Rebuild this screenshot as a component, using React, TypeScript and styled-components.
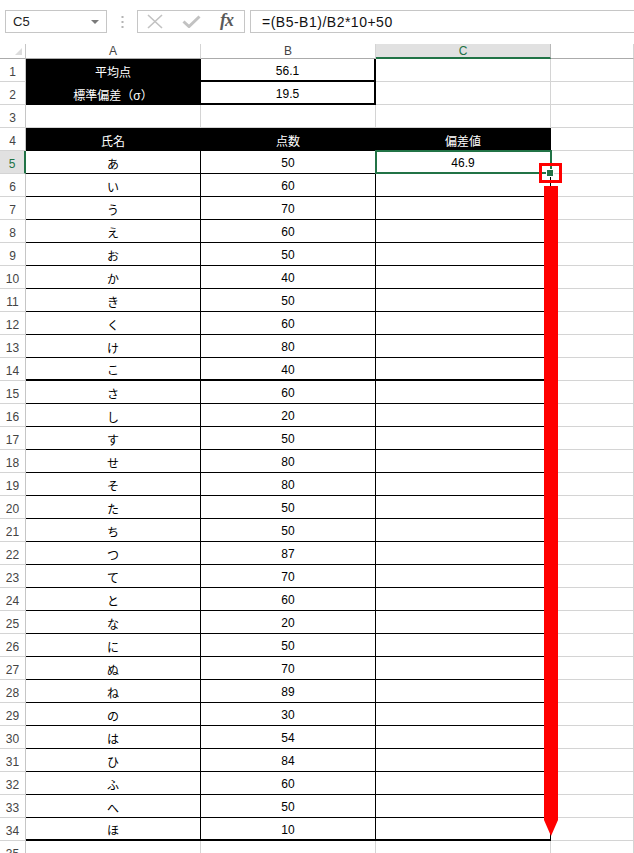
import React from 'react';
import styled, { createGlobalStyle } from 'styled-components';

const GREEN = '#217346';
const GRID = '#d4d4d4';

const GlobalStyle = createGlobalStyle`
  html, body {
    margin: 0;
    padding: 0;
    background: #fff;
  }
  body {
    font-family: "Liberation Sans", "Noto Sans CJK JP", sans-serif;
  }
`;

const Window = styled.div`
  position: relative;
  width: 634px;
  height: 853px;
  overflow: hidden;
  background: #fff;
`;

/* formula bar */

const Toolbar = styled.div`
  display: flex;
  align-items: flex-start;
  height: 44px;
  padding: 10px 0 0 5px;
  box-sizing: border-box;
`;

const NameBox = styled.div`
  box-sizing: border-box;
  width: 102px;
  height: 23px;
  border: 1px solid #c6c6c6;
  display: flex;
  align-items: center;
  justify-content: space-between;
  padding: 0 7px 0 7px;
  font-size: 13px;
  color: #222;
`;

const DropArrow = styled.span`
  width: 0;
  height: 0;
  border-left: 4px solid transparent;
  border-right: 4px solid transparent;
  border-top: 4px solid #7a7a7a;
`;

const Grip = styled.svg`
  margin: 6px 13px 0 14px;
`;

const ButtonGroup = styled.div`
  box-sizing: border-box;
  width: 108px;
  height: 23px;
  border: 1px solid #c6c6c6;
  display: flex;
  align-items: center;
  gap: 19px;
  padding-left: 9px;
`;

const Fx = styled.span`
  font-family: "Liberation Serif", serif;
  font-style: italic;
  font-weight: bold;
  font-size: 18px;
  color: #5a5a5a;
  letter-spacing: -1px;
  margin-top: -2px;
`;

const FormulaInput = styled.div`
  box-sizing: border-box;
  flex: 1;
  height: 23px;
  margin: 0 -10px 0 5px;
  border: 1px solid #c6c6c6;
  display: flex;
  align-items: center;
  padding-left: 11px;
  font-size: 14px;
  letter-spacing: 0.5px;
  color: #111;
`;

/* sheet grid */

const Sheet = styled.div`
  display: grid;
  grid-template-columns: 26px 175px 175px 175px 1fr;
  grid-template-rows: 15px;
  grid-auto-rows: 23px;
`;

const Corner = styled.div`
  position: relative;
  box-sizing: border-box;
  border-right: 1px solid #c6c6c6;
  border-bottom: 1px solid #ababab;

  &::after {
    content: '';
    position: absolute;
    right: 3px;
    bottom: 3px;
    width: 0;
    height: 0;
    border-left: 7px solid transparent;
    border-bottom: 7px solid #dcdcdc;
  }
`;

const ColHead = styled.div<{ $active?: boolean }>`
  box-sizing: border-box;
  display: flex;
  align-items: center;
  justify-content: center;
  font-size: 12px;
  color: ${p => (p.$active ? GREEN : '#444')};
  background: ${p => (p.$active ? '#e1e1e1' : '#fff')};
  border-right: 1px solid ${p => (p.$active ? '#b8b8b8' : GRID)};
  border-bottom: ${p => (p.$active ? `2px solid ${GREEN}` : '1px solid #ababab')};
`;

const RowHead = styled.div<{ $active?: boolean }>`
  box-sizing: border-box;
  display: flex;
  align-items: flex-end;
  justify-content: center;
  padding-bottom: 2px;
  font-size: 12px;
  color: ${p => (p.$active ? GREEN : '#444')};
  background: ${p => (p.$active ? '#e1e1e1' : '#fff')};
  border-right: ${p => (p.$active ? `2px solid ${GREEN}` : '1px solid #c6c6c6')};
  border-bottom: 1px solid ${GRID};
`;

type Line = 'grid' | 'black' | 'thick';

const edge = (l: Line = 'grid') =>
  l === 'thick' ? '2px solid #000' : l === 'black' ? '1px solid #000' : `1px solid ${GRID}`;

const Cell = styled.div<{ $dark?: boolean; $right?: Line; $bottom?: Line }>`
  position: relative;
  box-sizing: border-box;
  display: flex;
  align-items: center;
  justify-content: center;
  padding-top: 2px;
  font-size: 12px;
  color: ${p => (p.$dark ? '#fff' : '#000')};
  background: ${p => (p.$dark ? '#000' : '#fff')};
  border-right: ${p => edge(p.$right)};
  border-bottom: ${p => edge(p.$bottom)};
`;

const Selection = styled.div`
  position: absolute;
  top: -1px;
  left: -1px;
  right: -2px;
  bottom: -1px;
  border: 2px solid ${GREEN};
  z-index: 2;
  pointer-events: none;
`;

const FillHandle = styled.div`
  position: absolute;
  left: 170px;
  top: 18px;
  width: 6px;
  height: 6px;
  background: ${GREEN};
  border: 1px solid #fff;
  z-index: 3;
`;

const Annotation = styled.svg`
  position: absolute;
  left: 0;
  top: 0;
  pointer-events: none;
  z-index: 5;
`;

const students: [string, number][] = [
  ['あ', 50], ['い', 60], ['う', 70], ['え', 60], ['お', 50],
  ['か', 40], ['き', 50], ['く', 60], ['け', 80], ['こ', 40],
  ['さ', 60], ['し', 20], ['す', 50], ['せ', 80], ['そ', 80],
  ['た', 50], ['ち', 50], ['つ', 87], ['て', 70], ['と', 60],
  ['な', 20], ['に', 50], ['ぬ', 70], ['ね', 89], ['の', 30],
  ['は', 54], ['ひ', 84], ['ふ', 60], ['へ', 50], ['ほ', 10],
];

const FIRST_DATA_ROW = 5;

export default function App() {
  return (
    <Window>
      <GlobalStyle />
      <Toolbar>
        <NameBox>
          <span>C5</span>
          <DropArrow />
        </NameBox>
        <Grip width="3" height="14" viewBox="0 0 3 14">
          <rect x="0.5" y="0" width="2" height="2" fill="#b4b4b4" />
          <rect x="0.5" y="5" width="2" height="2" fill="#b4b4b4" />
          <rect x="0.5" y="10" width="2" height="2" fill="#b4b4b4" />
        </Grip>
        <ButtonGroup>
          <svg width="16" height="15" viewBox="0 0 16 15">
            <path d="M1 1 L15 14 M15 1 L1 14" stroke="#c2c2c2" strokeWidth="1.6" fill="none" />
          </svg>
          <svg width="19" height="13" viewBox="0 0 19 13">
            <path d="M1.5 6.5 L7 11.5 L17.5 1.5" stroke="#c2c2c2" strokeWidth="3" fill="none" />
          </svg>
          <Fx>fx</Fx>
        </ButtonGroup>
        <FormulaInput>=(B5-B1)/B2*10+50</FormulaInput>
      </Toolbar>

      <Sheet>
        <Corner />
        <ColHead>A</ColHead>
        <ColHead>B</ColHead>
        <ColHead $active>C</ColHead>
        <ColHead />

        <RowHead>1</RowHead>
        <Cell $dark $right="black" $bottom="black">平均点</Cell>
        <Cell $right="thick" $bottom="thick">56.1</Cell>
        <Cell />
        <Cell />

        <RowHead>2</RowHead>
        <Cell $dark $right="black" $bottom="black">標準偏差（σ）</Cell>
        <Cell $right="thick" $bottom="thick">19.5</Cell>
        <Cell />
        <Cell />

        <RowHead>3</RowHead>
        <Cell />
        <Cell />
        <Cell />
        <Cell />

        <RowHead>4</RowHead>
        <Cell $dark $right="black" $bottom="black">氏名</Cell>
        <Cell $dark $right="black" $bottom="black">点数</Cell>
        <Cell $dark $right="black" $bottom="black">偏差値</Cell>
        <Cell />

        {students.map(([name, score], i) => {
          const row = FIRST_DATA_ROW + i;
          const bottom: Line = row === 14 || row === 34 ? 'thick' : 'black';
          return (
            <React.Fragment key={row}>
              <RowHead $active={row === 5}>{row}</RowHead>
              <Cell $right="black" $bottom={bottom}>{name}</Cell>
              <Cell $right="black" $bottom={bottom}>{score}</Cell>
              <Cell $right="black" $bottom={bottom}>
                {row === 5 && (
                  <>
                    46.9
                    <Selection />
                    <FillHandle />
                  </>
                )}
              </Cell>
              <Cell />
            </React.Fragment>
          );
        })}

        <RowHead>35</RowHead>
        <Cell />
        <Cell />
        <Cell />
        <Cell />
      </Sheet>

      {/* red callout: fill handle box and drag arrow down to row 34 */}
      <Annotation width="634" height="853" viewBox="0 0 634 853">
        <rect x="540.5" y="164.5" width="20" height="17" fill="none" stroke="#ff0000" strokeWidth="3" />
        <polygon points="544,186 558,186 558,820 551,836 544,820" fill="#ff0000" />
      </Annotation>
    </Window>
  );
}
